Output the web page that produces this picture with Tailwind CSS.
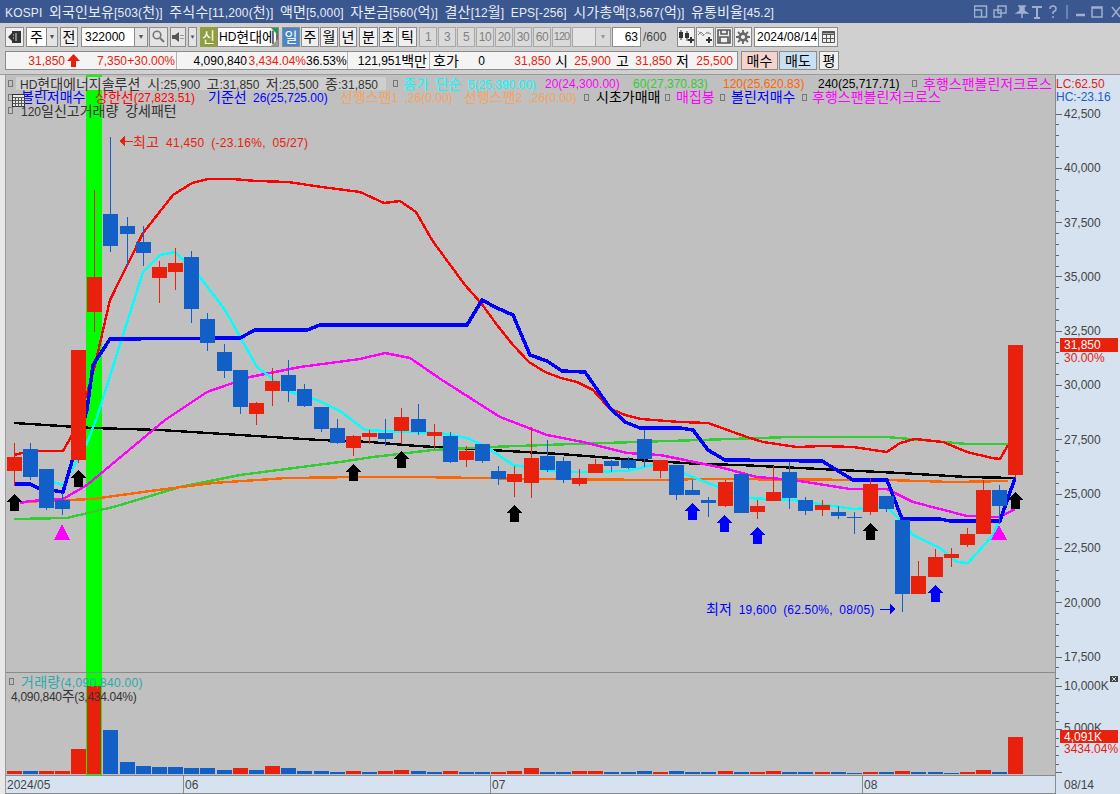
<!DOCTYPE html>
<html lang="ko">

<head>
    <meta charset="UTF-8">
    <title>HD현대에너지솔루션 차트</title>
    <script src="https://cdn.jsdelivr.net/npm/@tailwindcss/browser@4"></script>
</head>

<body class="w-[1120px] h-[794px] overflow-hidden flex flex-col bg-[#d0d0d0] text-[12px] [word-spacing:3px] leading-none text-black font-['Liberation_Sans','Noto_Sans_CJK_KR',sans-serif] [&_b]:text-[14px] [&_b]:font-normal">

    <!-- Title bar -->
    <header class="h-[23px] shrink-0 bg-[#3a5790] text-[#e8ecf4] flex items-center pl-[5px] relative">
        <span class="whitespace-nowrap tracking-[0.15px]">KOSPI <b>외국인보유</b>[503(<b>천</b>)] <b>주식수</b>[11,200(<b>천</b>)] <b>액면</b>[5,000] <b>자본금</b>[560(<b>억</b>)] <b>결산</b>[12<b>월</b>] EPS[-256] <b>시가총액</b>[3,567(<b>억</b>)] <b>유통비율</b>[45.2]</span>
        <div class="absolute left-[974px] top-[5px] flex items-start text-[#9fb0cf]">
            <svg width="146" height="14" viewBox="0 0 146 14" fill="none" stroke="#9fb0cf" stroke-width="1.5">
                <path d="M0.5 1h12v11h-12zM0.5 5h7v7" />
                <path d="M24 1h8v7h-8zM20 5h7v7h-7z" />
                <path d="M44 1h8M46 1v5l-3 2h10l-3-2V1M48 8v5" fill="#9fb0cf" />
                <path d="M58 2h10M63 2v11M60 13h6" stroke-width="2" />
                <path d="M76 4q0-3 3-3t3 3q0 2-3 3v2M79 11v2" />
                <path d="M93 0v14" stroke-width="1" />
                <path d="M102 10h9" stroke-width="2.5" />
                <path d="M118 2h10v10h-10z M118 3h10" />
                <path d="M138 2l8 10M146 2l-8 10" />
            </svg>
        </div>
    </header>

    <!-- Toolbar row 1 -->
    <div class="h-[27px] shrink-0 flex items-center pl-[5px] text-center">
        <button class="w-[19px] h-[20px] border border-[#8c8c8c] bg-[#f0f0f0] flex items-center justify-center">
            <svg width="15" height="14" viewBox="0 0 15 14"><path d="M5 1h9v12H5z" fill="#333" /><path d="M1 7l4-4v8z" fill="#333" /><path d="M9 3v8M6 5h1M6 8h1" stroke="#ddd" /></svg>
        </button>
        <button class="ml-[2px] w-[21px] h-[20px] border border-[#8c8c8c] bg-white"><b>주</b></button>
        <button class="w-[11px] h-[20px] border border-l-0 border-[#8c8c8c] bg-[#e4e4e4] text-[#555] text-[7px]">▼</button>
        <button class="ml-[2px] w-[18px] h-[20px] border border-[#8c8c8c] bg-[#f0f0f0]"><b>전</b></button>
        <div class="ml-[3px] w-[54px] h-[20px] border border-[#8c8c8c] bg-white text-left pl-[3px] flex items-center">322000</div>
        <button class="w-[13px] h-[20px] border border-l-0 border-[#8c8c8c] bg-[#e4e4e4] text-[#555] text-[7px]">▼</button>
        <button class="ml-[1px] w-[19px] h-[20px] border border-[#8c8c8c] bg-[#e4e4e4] flex items-center justify-center">
            <svg width="13" height="13" viewBox="0 0 13 13" fill="none" stroke="#777" stroke-width="1.6"><circle cx="5" cy="5" r="3.8" /><path d="M8 8l4 4" stroke-width="2.2" /></svg>
        </button>
        <button class="ml-[2px] w-[16px] h-[20px] border border-[#8c8c8c] bg-[#e4e4e4] flex items-center justify-center">
            <svg width="12" height="12" viewBox="0 0 12 12"><path d="M0 4h3l4-3v10L3 8H0z" fill="#555" /><path d="M9 4v1M9 7v1M11 4v1M11 7v1" stroke="#555" /></svg>
        </button>
        <button class="ml-[2px] w-[9px] h-[20px] border border-[#8c8c8c] bg-[#e4e4e4] text-[#555] text-[6px]">▼</button>
        <span class="ml-[3px] w-[17px] h-[20px] bg-[#8f9f3c] text-white flex items-center justify-center"><b>신</b></span>
        <div class="w-[62px] h-[20px] border border-[#8c8c8c] bg-white relative overflow-hidden whitespace-nowrap text-left pl-[1px] flex items-center">HD<b>현대에너</b>
            <span class="absolute right-0 top-0 border-t-[7px] border-l-[7px] border-t-[#1f9a5a] border-l-transparent"></span>
            <span class="absolute right-0 bottom-0 border-b-[7px] border-l-[7px] border-b-[#9a9a9a] border-l-transparent"></span>
        </div>
        <button class="ml-[3px] w-[18px] h-[20px] border border-[#8c8c8c] bg-[#4a86c5] text-white"><b>일</b></button>
        <button class="ml-px w-[18px] h-[20px] border border-[#8c8c8c] bg-[#f0f0f0]"><b>주</b></button>
        <button class="ml-px w-[18px] h-[20px] border border-[#8c8c8c] bg-[#f0f0f0]"><b>월</b></button>
        <button class="ml-px w-[18px] h-[20px] border border-[#8c8c8c] bg-[#f0f0f0]"><b>년</b></button>
        <button class="ml-[2px] w-[19px] h-[20px] border border-[#8c8c8c] bg-[#f0f0f0]"><b>분</b></button>
        <button class="ml-px w-[18px] h-[20px] border border-[#8c8c8c] bg-[#f0f0f0]"><b>초</b></button>
        <button class="ml-px w-[19px] h-[20px] border border-[#8c8c8c] bg-[#f0f0f0]"><b>틱</b></button>
        <div class="ml-[2px] flex gap-px text-[#808080] tracking-[-0.5px]">
            <button class="w-[18px] h-[20px] border border-[#a8a8a8] bg-[#dadada]">1</button>
            <button class="w-[18px] h-[20px] border border-[#a8a8a8] bg-[#dadada]">3</button>
            <button class="w-[18px] h-[20px] border border-[#a8a8a8] bg-[#dadada]">5</button>
            <button class="w-[18px] h-[20px] border border-[#a8a8a8] bg-[#dadada]">10</button>
            <button class="w-[18px] h-[20px] border border-[#a8a8a8] bg-[#dadada]">20</button>
            <button class="w-[18px] h-[20px] border border-[#a8a8a8] bg-[#dadada]">30</button>
            <button class="w-[18px] h-[20px] border border-[#a8a8a8] bg-[#dadada]">60</button>
            <button class="w-[19px] h-[20px] border border-[#a8a8a8] bg-[#dadada] text-[11px] tracking-[-1px]">120</button>
        </div>
        <div class="ml-px w-[24px] h-[20px] border border-[#a8a8a8] bg-[#e4e4e4]"></div>
        <button class="w-[15px] h-[20px] border border-l-0 border-[#a8a8a8] bg-[#dadada] text-[#999] text-[7px]">▼</button>
        <div class="ml-px w-[29px] h-[20px] border border-[#8c8c8c] bg-white text-right pr-[2px] flex items-center justify-end">63</div>
        <span class="ml-[2px] w-[33px] text-[#444] text-left">/600</span>
        <button class="ml-[1px] w-[18px] h-[20px] border border-[#8c8c8c] bg-[#f0f0f0] flex items-center justify-center">
            <svg width="16" height="15" viewBox="0 0 16 15"><path d="M3 1v10M9 2v10" stroke="#333" /><path d="M1 3h4v6H1zM7 4h4v5H7z" fill="#333" /><path d="M13 8v6M10 11h6" stroke="#333" stroke-width="2" /></svg>
        </button>
        <button class="ml-px w-[18px] h-[20px] border border-[#8c8c8c] bg-[#f0f0f0] flex items-center justify-center">
            <svg width="16" height="15" viewBox="0 0 16 15" fill="none"><path d="M1 6l3-3 3 3 3-3 4 2" stroke="#888" /><path d="M1 2l5 5 3-3 5 1" stroke="#aaa" /><path d="M12 8v6M9 11h6" stroke="#333" stroke-width="2" /></svg>
        </button>
        <button class="ml-px w-[18px] h-[20px] border border-[#8c8c8c] bg-[#f0f0f0] flex items-center justify-center">
            <svg width="14" height="15" viewBox="0 0 14 15" fill="none" stroke="#555" stroke-width="1.6"><path d="M1 1h12v13H1zM4 1v4h6V1M3 14V8h8v6" /></svg>
        </button>
        <button class="ml-px w-[18px] h-[20px] border border-[#8c8c8c] bg-[#f0f0f0] flex items-center justify-center">
            <svg width="14" height="14" viewBox="0 0 14 14" fill="none" stroke="#666"><circle cx="7" cy="7" r="3.4" stroke-width="2.6" /><path d="M7 0v3M7 11v3M0 7h3M11 7h3M2 2l2 2M10 10l2 2M12 2l-2 2M4 10l-2 2" stroke-width="1.8" /></svg>
        </button>
        <div class="ml-[2px] w-[65px] h-[20px] border border-[#8c8c8c] bg-white flex items-center pl-[2px] whitespace-nowrap">2024/08/14</div>
        <button class="w-[19px] h-[20px] border border-l-0 border-[#8c8c8c] bg-[#f0f0f0] flex items-center justify-center">
            <svg width="13" height="12" viewBox="0 0 13 12" fill="none" stroke="#555"><path d="M.5 .5h12v11H.5zM.5 3.5h12M.5 7.5h12M4.5 3.5v8M8.5 3.5v8" /><path d="M.5 1.5h12" stroke-width="2" /></svg>
        </button>
    </div>

    <!-- Toolbar row 2 -->
    <div class="h-[24px] shrink-0 flex items-start pl-[5px] pt-[1px] whitespace-nowrap">
        <div class="w-[733px] h-[19px] border border-[#8c8c8c] bg-[#f4f4f4] flex items-center text-[#e8200c]">
            <div class="w-[171px] h-full flex items-center border-r border-[#b4b4b4]">
                <span class="w-[59px] text-right">31,850</span>
                <svg class="ml-[2px]" width="13" height="13" viewBox="0 0 13 13"><path d="M6.5 0L13 7H9v6H4V7H0z" fill="#e8200c" /></svg>
                <span class="w-[47px] text-right">7,350</span>
                <span class="w-[48px] text-right">+30.00%</span>
            </div>
            <div class="w-[171px] h-full flex items-center border-r border-[#b4b4b4]">
                <span class="w-[70px] text-right text-black">4,090,840</span>
                <span class="w-[59px] text-right">3,434.04%</span>
                <span class="w-[40px] text-right text-black">36.53%</span>
            </div>
            <div class="w-[82px] h-full flex items-center border-r border-[#b4b4b4] text-black justify-end pr-[2px]">121,951<b>백만</b></div>
            <div class="flex items-center text-black pl-[3px]">
                <span class="w-[27px]"><b>호가</b></span>
                <span class="w-[25px] text-right">0</span>
                <span class="w-[66px] text-right text-[#e8200c]">31,850</span>
                <span class="w-[17px] text-right"><b>시</b></span>
                <span class="w-[43px] text-right text-[#e8200c]">25,900</span>
                <span class="w-[18px] text-right"><b>고</b></span>
                <span class="w-[43px] text-right text-[#e8200c]">31,850</span>
                <span class="w-[17px] text-right"><b>저</b></span>
                <span class="w-[44px] text-right text-[#e8200c]">25,500</span>
            </div>
        </div>
        <button class="ml-[3px] w-[37px] h-[19px] border border-[#8c8c8c] bg-[#f5d2cc]"><b>매수</b></button>
        <button class="ml-px w-[38px] h-[19px] border border-[#8c8c8c] bg-[#c9dff2]"><b>매도</b></button>
        <button class="ml-[2px] w-[20px] h-[19px] border border-[#8c8c8c] bg-[#f0f0f0]"><b>평</b></button>
    </div>

    <!-- Chart -->
    <main class="relative flex-1 flex border-t border-[#9a9a9a]">
        <div class="w-[5px] bg-[#e8e8e8]"></div>
        <div class="flex-1 flex flex-col border-l border-[#9a9a9a]">
            <div class="flex-1 bg-[#c0c0c0]"></div>
            <div class="h-[19px] bg-[#d6e2f0] border-y border-[#8a8a8a]"></div>
        </div>
        <div class="w-[65px] bg-[#d6e2f0] border-l border-[#8a8a8a]"></div>

        <svg id="chart" class="absolute left-0 -top-px" width="1120" height="720" viewBox="0 74 1120 720" shape-rendering="crispEdges"></svg>

        <!-- Legend -->
        <div class="absolute left-[8px] top-[2px] whitespace-nowrap">
            <div class="h-[13px] flex items-center">
                <i class="w-[5px] h-[7px] border border-[#777]"></i>
                <span class="ml-[3px] w-[370px] h-[13px] pl-[4px] bg-[#cfcfcf] text-[#333] flex items-center whitespace-pre"><span>HD<b>현대에너지솔루션 시</b>:25,900 <b>고</b>:31,850 <b>저</b>:25,500 <b>종</b>:31,850</span></span>
                <i class="ml-[7px] w-[5px] h-[7px] border border-[#777]"></i>
                <span class="ml-[5px] w-[142px] text-[#00ffff]"><b>종가 단순</b> 5(25,390.00)</span>
                <span class="w-[88px] text-[#ff00ff]">20(24,300.00)</span>
                <span class="w-[90px] text-[#32cd32]">60(27,370.83)</span>
                <span class="w-[95px] text-[#ff6600]">120(25,620.83)</span>
                <span class="w-[94px]">240(25,717.71)</span>
                <i class="w-[5px] h-[7px] border border-[#777]"></i>
                <span class="ml-[6px] text-[#ff00ff]"><b>후행스팬볼린저크로스</b></span>
            </div>
            <div class="h-[14px] flex items-center">
                <i class="w-[5px] h-[7px] border border-[#777]"></i>
                <span class="ml-[8px] w-[74px] text-[#0000ff]"><b>볼린저매수</b></span>
                <span class="w-[113px] text-[#ff0000]"><b>상한선</b>(27,823.51)</span>
                <span class="w-[132px] text-[#0000ff]"><b>기준선</b> 26(25,725.00)</span>
                <span class="w-[124px] text-[#f4a460]"><b>선행스팬</b>1 ,26(0.00)</span>
                <span class="w-[120px] text-[#f4a460]"><b>선행스팬</b>2 ,26(0.00)</span>
                <i class="w-[5px] h-[7px] border border-[#777]"></i>
                <span class="ml-[7px] w-[69px]"><b>시초가매매</b></span>
                <i class="w-[5px] h-[7px] border border-[#777]"></i>
                <span class="ml-[6px] w-[44px] text-[#ff00ff]"><b>매집봉</b></span>
                <i class="w-[5px] h-[7px] border border-[#777]"></i>
                <span class="ml-[6px] w-[71px] text-[#0000ff]"><b>볼린저매수</b></span>
                <i class="w-[5px] h-[7px] border border-[#777]"></i>
                <span class="ml-[5px] text-[#ff00ff]"><b>후행스팬볼린저크로스</b></span>
            </div>
            <div class="h-[13px] flex items-center">
                <i class="w-[5px] h-[7px] border border-[#777]"></i>
                <span class="ml-[8px] text-[#333]">120<b>일신고거래량 강세패턴</b></span>
            </div>
        </div>
        <svg class="absolute left-[12px] top-[19px]" width="13" height="13" viewBox="0 0 13 13" shape-rendering="crispEdges"><path d="M.5 .5h12v12H.5z" fill="#e8e8e8" stroke="#333" /><path d="M.5 3.5h12M.5 6.5h12M.5 9.5h12M3.5 3.5v9M6.5 3.5v9M9.5 3.5v9" stroke="#555" fill="none" /></svg>

        <!-- Price labels on the chart -->
        <span class="absolute left-[133px] top-[60px] whitespace-nowrap tracking-[0.3px] text-[#e8200c]"><b>최고</b> 41,450 (-23.16%, 05/27)</span>
        <span class="absolute left-[706px] top-[527px] whitespace-nowrap tracking-[0.2px] text-[#0000ff]"><b>최저</b> 19,600 (62.50%, 08/05)</span>

        <!-- Volume legend -->
        <div class="absolute left-[9px] top-[600px] whitespace-nowrap">
            <div class="flex items-center h-[13px]"><i class="w-[5px] h-[7px] border border-[#777]"></i><span class="ml-[7px] tracking-[0.3px] text-[#2ea8a8]"><b>거래량</b>(4,090,840.00)</span></div>
            <div class="mt-px ml-[2px] tracking-[-0.3px] text-[#333]">4,090,840<b>주</b>(3,434.04%)</div>
        </div>

        <!-- Price axis -->
        <div class="absolute left-[1056px] top-[3px] whitespace-nowrap">
            <div class="h-[13px] text-[#e8200c]">LC:62.50</div>
            <div class="h-[13px] text-[#1a5fc8]">HC:-23.16</div>
        </div>
        <div id="axis" class="text-[#444]">
            <span class="absolute left-[1064px] top-[33px]">42,500</span>
            <span class="absolute left-[1064px] top-[87px]">40,000</span>
            <span class="absolute left-[1064px] top-[142px]">37,500</span>
            <span class="absolute left-[1064px] top-[196px]">35,000</span>
            <span class="absolute left-[1064px] top-[250px]">32,500</span>
            <span class="absolute left-[1064px] top-[304px]">30,000</span>
            <span class="absolute left-[1064px] top-[359px]">27,500</span>
            <span class="absolute left-[1064px] top-[413px]">25,000</span>
            <span class="absolute left-[1064px] top-[467px]">22,500</span>
            <span class="absolute left-[1064px] top-[522px]">20,000</span>
            <span class="absolute left-[1064px] top-[576px]">17,500</span>
            <span class="absolute left-[1064px] top-[605px]">10,000K</span>
            <span class="absolute left-[1064px] top-[647px]">5,000K</span>
        </div>
        <div class="absolute left-[1060px] top-[263px] w-[58px] h-[14px] bg-[#e8200c] text-white pl-[4px] flex items-center">31,850</div>
        <div class="absolute left-[1064px] top-[277px] text-[#e8200c]">30.00%</div>
        <div class="absolute left-[1060px] top-[655px] w-[58px] h-[13px] bg-[#e8200c] text-white pl-[4px] flex items-center">4,091K</div>
        <div class="absolute left-[1064px] top-[668px] text-[#e8200c]">3434.04%</div>
        <svg class="absolute left-[1110px] top-[601px]" width="8" height="6" viewBox="0 0 8 6"><path d="M0 0h8v6H0z" fill="#444" /><path d="M2 1l4 4M6 1L2 5" stroke="#ddd" /></svg>

        <!-- Date axis -->
        <span class="absolute left-[7px] top-[704px] text-[#444]">2024/05</span>
        <span class="absolute left-[185px] top-[704px] text-[#444]">06</span>
        <span class="absolute left-[492px] top-[704px] text-[#444]">07</span>
        <span class="absolute left-[864px] top-[704px] text-[#444]">08</span>
        <span class="absolute left-[1064px] top-[704px] text-[#444]">08/14</span>
    </main>

    <script>
        const RED = '#e8200c', BLUE = '#135fc8';
        const STEP = 16.16;

        // [color, top, bottom, high, low] in screen pixels
        const candles = [
            [RED, 457, 471, 443, 486], [BLUE, 449, 477, 443, 480], [BLUE, 469, 508, 469, 510], [BLUE, 500, 509, 493, 515],
            [RED, 350, 460, 350, 463], [RED, 277, 312, 190, 332], [BLUE, 214, 246, 137, 252], [BLUE, 226, 234, 217, 267],
            [BLUE, 242, 253, 226, 266], [RED, 267, 278, 261, 303], [RED, 263, 272, 248, 290], [BLUE, 257, 309, 251, 323],
            [BLUE, 319, 343, 313, 351], [BLUE, 352, 371, 344, 378], [BLUE, 370, 407, 370, 414], [RED, 403, 414, 402, 425],
            [RED, 381, 391, 368, 406], [BLUE, 375, 391, 360, 402], [BLUE, 389, 406, 384, 407], [BLUE, 407, 429, 407, 432],
            [BLUE, 428, 443, 419, 444], [RED, 436, 448, 435, 456], [RED, 433, 437, 430, 444], [BLUE, 433, 439, 419, 446],
            [RED, 417, 431, 408, 444], [BLUE, 419, 432, 404, 435], [RED, 432, 436, 424, 449], [BLUE, 436, 462, 432, 463],
            [RED, 451, 460, 446, 467], [BLUE, 444, 461, 444, 463], [BLUE, 471, 479, 466, 485], [RED, 474, 482, 466, 497],
            [RED, 458, 483, 427, 498], [BLUE, 456, 470, 440, 472], [BLUE, 461, 480, 457, 483], [RED, 478, 484, 469, 486],
            [RED, 464, 473, 459, 473], [BLUE, 461, 466, 460, 472], [BLUE, 460, 468, 457, 469], [BLUE, 439, 459, 430, 467],
            [RED, 460, 471, 460, 478], [BLUE, 465, 495, 465, 500], [BLUE, 490, 495, 480, 495], [BLUE, 500, 503, 497, 517],
            [RED, 482, 506, 480, 507], [BLUE, 474, 513, 474, 513], [RED, 506, 512, 500, 519], [RED, 492, 501, 466, 501],
            [BLUE, 472, 498, 462, 509], [BLUE, 500, 511, 497, 515], [RED, 505, 510, 500, 516], [BLUE, 512, 516, 506, 519],
            [BLUE, 517, 518, 512, 534], [RED, 484, 512, 478, 515], [BLUE, 496, 509, 496, 512], [BLUE, 520, 594, 520, 612],
            [RED, 576, 594, 561, 594], [RED, 557, 577, 549, 577], [RED, 554, 558, 548, 567], [RED, 534, 545, 528, 547],
            [RED, 490, 534, 480, 534], [BLUE, 490, 506, 485, 524], [RED, 345, 475, 345, 478]
        ];

        // [isRed, height]
        const volumes = [
            [1, 3], [0, 3], [1, 3], [1, 3], [1, 25], [1, 88], [0, 44], [0, 12], [0, 8], [0, 7], [0, 7], [0, 6], [0, 6], [0, 4], [1, 6], [0, 4],
            [1, 8], [0, 6], [0, 3], [0, 3], [0, 2], [1, 3], [0, 2], [1, 3], [1, 4], [0, 3], [0, 2], [1, 3], [0, 2], [0, 2], [1, 2], [1, 3],
            [1, 6], [0, 2], [0, 2], [1, 3], [1, 3], [0, 2], [0, 2], [0, 3], [1, 2], [0, 3], [0, 2], [0, 2], [1, 3], [0, 2], [1, 2], [1, 3],
            [0, 2], [0, 2], [1, 2], [0, 2], [0, 1], [1, 2], [0, 2], [1, 3], [0, 2], [0, 2], [0, 1], [1, 2], [1, 4], [0, 2], [1, 37]
        ];

        const lines = [
            ['#000000', 2.4, '14,423 93,428 160,430 240,435 320,440 370,442 417,446 490,450 560,454 637,460 700,464 740,465 820,469 900,473 967,477 1015,478'],
            ['#32cd32', 2.4, '14,519 67,518 117,506 180,487 240,475 340,462 373,457 433,450 490,447 573,444 700,440 790,437 887,437 967,444 1008,444'],
            ['#ff6600', 2.4, '20,502 93,499 150,491 213,483 287,478 360,477 417,477 540,479 660,480 700,479 887,480 952,482 1008,481'],
            ['#ff00ff', 2.4, '20,503 30,501 63,499 87,485 117,460 153,430 165,420 207,392 250,377 300,367 360,359 385,353 410,358 442,380 500,417 547,435 583,442 627,453 660,455 680,459 723,468 757,477 793,480 850,489 887,489 913,502 967,516 1000,517 1015,509'],
            ['#00ffff', 2.4, '53,482 63,485 87,443 97,417 143,272 160,255 175,252 200,277 225,310 257,367 290,392 317,400 340,411 365,430 407,432 440,433 467,438 487,447 513,465 553,471 580,472 627,471 653,465 680,472 700,480 747,498 793,500 853,509 887,507 900,520 913,535 940,548 957,562 968,563 993,535 1008,500 1015,478'],
            ['#ff0000', 2.4, '14,455 30,451 63,451 72,435 88,390 95,365 110,300 143,233 173,195 192,183 208,179 232,179 257,181 288,182 322,187 360,192 384,203 400,201 416,212 432,240 448,262 465,285 481,303 497,325 513,345 529,362 545,372 561,378 577,382 593,390 609,408 625,415 641,419 680,422 708,423 747,437 763,442 797,447 823,446 853,447 887,452 900,443 915,439 943,442 967,452 992,458 1000,459 1008,445'],
            ['#0000ff', 3.5, '14,484 30,484 38,488 63,492 87,410 93,365 110,339 240,338 255,330 307,330 320,325 467,325 482,300 497,308 513,315 530,355 547,361 562,371 585,372 610,408 625,422 640,428 680,428 693,430 708,450 725,460 822,461 853,480 887,480 902,519 940,519 950,521 1000,521 1015,478']
        ];

        // [color, center x, top]
        const arrows = [
            ['#000', 14, 494], ['#000', 78, 470], ['#000', 353, 464], ['#000', 401, 451], ['#000', 514, 505], ['#000', 870, 523], ['#000', 1015, 492],
            ['#0000ff', 692, 503], ['#0000ff', 724, 515], ['#0000ff', 757, 527], ['#0000ff', 935, 585]
        ];

        let out = '<rect x="86" y="75" width="16" height="700" fill="#00ff00"/>';

        for (const [color, width, points] of lines) {
            out += `<polyline points="${points}" fill="none" stroke="${color}" stroke-width="${width}"/>`;
        }

        candles.forEach(([color, top, bottom, high, low], i) => {
            const x = Math.floor(7 + STEP * i);
            out += `<rect x="${x + 7}" y="${high}" width="1" height="${low - high}" fill="${color}"/>`;
            out += `<rect x="${x}" y="${top}" width="15" height="${bottom - top}" fill="${color}"/>`;
        });

        volumes.forEach(([isRed, height], i) => {
            const x = Math.floor(7 + STEP * i);
            out += `<rect x="${x}" y="${774 - height}" width="15" height="${height}" fill="${isRed ? RED : BLUE}"/>`;
        });
        out += '<path d="M86.5 686V775M101.5 686V775" stroke="#00ff00"/>';

        for (const [color, x, y] of arrows) {
            out += `<polygon points="${x},${y} ${x + 9},${y + 8} ${x + 5},${y + 8} ${x + 5},${y + 17} ${x - 4},${y + 17} ${x - 4},${y + 8} ${x - 8},${y + 8}" fill="${color}"/>`;
        }
        out += '<polygon points="62,524 70,540 54,540" fill="#ff00ff"/><polygon points="999,525 1007,540 991,540" fill="#ff00ff"/>';

        // high / low markers
        out += '<path d="M125 141H133" stroke="#e8200c"/><polygon points="119,141 125,136 125,146" fill="#e8200c"/>';
        out += '<path d="M880 609H890" stroke="#0000ff"/><polygon points="895,609 890,604 890,614" fill="#0000ff"/>';

        // pane divider and axis ticks
        out += '<path d="M6 672.5H1055" stroke="#8a8a8a"/>';
        for (let y = 113.5, n = 0; y < 672; y += 10.86, n++) {
            const major = n % 5 === 0;
            out += `<path d="M1056 ${Math.round(y) + 0.5}H${major ? 1062 : 1059}" stroke="#666"/>`;
        }
        for (let y = 677.5, n = 0; y < 774; y += 8.6, n++) {
            const major = (n - 1) % 5 === 0;
            out += `<path d="M1056 ${Math.round(y) + 0.5}H${major ? 1062 : 1059}" stroke="#666"/>`;
        }
        out += '<path d="M183.5 775V793M490.5 775V793M862.5 775V793" stroke="#8a8a8a"/>';

        document.getElementById('chart').innerHTML = out;
    </script>
</body>

</html>
